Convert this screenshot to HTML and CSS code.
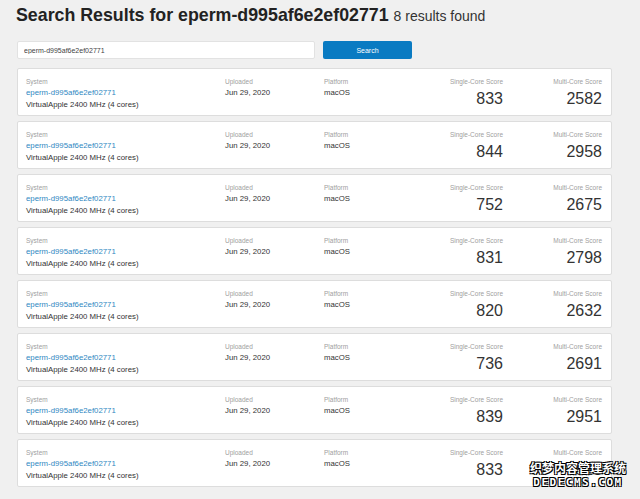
FILE: index.html
```html
<!DOCTYPE html>
<html lang="en">

<head>
    <meta charset="UTF-8">
    <meta name="viewport" content="width=device-width, initial-scale=1.0">
    <title>Search Results</title>
    <link rel="stylesheet" href="styles.css">
</head>

<body>
    <header class="page-header">
        <h1>Search Results for eperm-d995af6e2ef02771 <small>8 results found</small></h1>
    </header>

    <form class="search-form">
        <input class="search-input" type="text" value="eperm-d995af6e2ef02771">
        <button class="search-button" type="button">Search</button>
    </form>

    <main class="results">
        <div class="result">
            <div class="col system">
                <span class="label">System</span>
                <a class="link" href="#">eperm-d995af6e2ef02771</a>
                <span class="value">VirtualApple 2400 MHz (4 cores)</span>
            </div>
            <div class="col"><span class="label">Uploaded</span><span class="value">Jun 29, 2020</span></div>
            <div class="col"><span class="label">Platform</span><span class="value">macOS</span></div>
            <div class="col score"><span class="label">Single-Core Score</span><span class="number">833</span></div>
            <div class="col score"><span class="label">Multi-Core Score</span><span class="number">2582</span></div>
        </div>
        <div class="result">
            <div class="col system">
                <span class="label">System</span>
                <a class="link" href="#">eperm-d995af6e2ef02771</a>
                <span class="value">VirtualApple 2400 MHz (4 cores)</span>
            </div>
            <div class="col"><span class="label">Uploaded</span><span class="value">Jun 29, 2020</span></div>
            <div class="col"><span class="label">Platform</span><span class="value">macOS</span></div>
            <div class="col score"><span class="label">Single-Core Score</span><span class="number">844</span></div>
            <div class="col score"><span class="label">Multi-Core Score</span><span class="number">2958</span></div>
        </div>
        <div class="result">
            <div class="col system">
                <span class="label">System</span>
                <a class="link" href="#">eperm-d995af6e2ef02771</a>
                <span class="value">VirtualApple 2400 MHz (4 cores)</span>
            </div>
            <div class="col"><span class="label">Uploaded</span><span class="value">Jun 29, 2020</span></div>
            <div class="col"><span class="label">Platform</span><span class="value">macOS</span></div>
            <div class="col score"><span class="label">Single-Core Score</span><span class="number">752</span></div>
            <div class="col score"><span class="label">Multi-Core Score</span><span class="number">2675</span></div>
        </div>
        <div class="result">
            <div class="col system">
                <span class="label">System</span>
                <a class="link" href="#">eperm-d995af6e2ef02771</a>
                <span class="value">VirtualApple 2400 MHz (4 cores)</span>
            </div>
            <div class="col"><span class="label">Uploaded</span><span class="value">Jun 29, 2020</span></div>
            <div class="col"><span class="label">Platform</span><span class="value">macOS</span></div>
            <div class="col score"><span class="label">Single-Core Score</span><span class="number">831</span></div>
            <div class="col score"><span class="label">Multi-Core Score</span><span class="number">2798</span></div>
        </div>
        <div class="result">
            <div class="col system">
                <span class="label">System</span>
                <a class="link" href="#">eperm-d995af6e2ef02771</a>
                <span class="value">VirtualApple 2400 MHz (4 cores)</span>
            </div>
            <div class="col"><span class="label">Uploaded</span><span class="value">Jun 29, 2020</span></div>
            <div class="col"><span class="label">Platform</span><span class="value">macOS</span></div>
            <div class="col score"><span class="label">Single-Core Score</span><span class="number">820</span></div>
            <div class="col score"><span class="label">Multi-Core Score</span><span class="number">2632</span></div>
        </div>
        <div class="result">
            <div class="col system">
                <span class="label">System</span>
                <a class="link" href="#">eperm-d995af6e2ef02771</a>
                <span class="value">VirtualApple 2400 MHz (4 cores)</span>
            </div>
            <div class="col"><span class="label">Uploaded</span><span class="value">Jun 29, 2020</span></div>
            <div class="col"><span class="label">Platform</span><span class="value">macOS</span></div>
            <div class="col score"><span class="label">Single-Core Score</span><span class="number">736</span></div>
            <div class="col score"><span class="label">Multi-Core Score</span><span class="number">2691</span></div>
        </div>
        <div class="result">
            <div class="col system">
                <span class="label">System</span>
                <a class="link" href="#">eperm-d995af6e2ef02771</a>
                <span class="value">VirtualApple 2400 MHz (4 cores)</span>
            </div>
            <div class="col"><span class="label">Uploaded</span><span class="value">Jun 29, 2020</span></div>
            <div class="col"><span class="label">Platform</span><span class="value">macOS</span></div>
            <div class="col score"><span class="label">Single-Core Score</span><span class="number">839</span></div>
            <div class="col score"><span class="label">Multi-Core Score</span><span class="number">2951</span></div>
        </div>
        <div class="result">
            <div class="col system">
                <span class="label">System</span>
                <a class="link" href="#">eperm-d995af6e2ef02771</a>
                <span class="value">VirtualApple 2400 MHz (4 cores)</span>
            </div>
            <div class="col"><span class="label">Uploaded</span><span class="value">Jun 29, 2020</span></div>
            <div class="col"><span class="label">Platform</span><span class="value">macOS</span></div>
            <div class="col score"><span class="label">Single-Core Score</span><span class="number">833</span></div>
            <div class="col score"><span class="label">Multi-Core Score</span><span class="number">2826</span></div>
        </div>
    </main>

    <div class="watermark">
        <span class="watermark-cn">织梦内容管理系统</span>
        <span class="watermark-en">DEDECMS.COM</span>
    </div>
</body>

</html>
```

FILE: styles.css
```css
body {
    margin: 0;
    padding: 0 28px 0 16px;
    background: #f0f0f0;
    color: #333;
    font-family: "Liberation Sans", Arial, sans-serif;
}

.page-header h1 {
    margin: 0;
    padding-top: 5px;
    height: 36px;
    font-size: 17.8px;
    font-weight: bold;
    color: #222;
}

.page-header small {
    font-size: 14px;
    font-weight: normal;
    color: #333;
}

.search-form {
    display: flex;
    gap: 8px;
    margin-left: 1px;
    height: 18px;
}

.search-input {
    box-sizing: border-box;
    width: 298px;
    height: 18px;
    margin: 0;
    padding: 0 6px;
    border: 1px solid #e2e2e2;
    border-radius: 2px;
    background: #fff;
    font-family: inherit;
    font-size: 7px;
    color: #444;
}

.search-button {
    box-sizing: border-box;
    width: 89px;
    height: 18px;
    margin: 0;
    border: none;
    border-radius: 2px;
    background: #0a7bc2;
    color: #fff;
    font-family: inherit;
    font-size: 7px;
}

.results {
    display: flex;
    flex-direction: column;
    gap: 5px;
    margin: 9px 0 0 1px;
}

.result {
    box-sizing: border-box;
    height: 48px;
    padding: 8px 9px 0 8px;
    background: #fff;
    border: 1px solid #ddd;
    border-radius: 2px;
    display: grid;
    grid-template-columns: 199px 99px 99px 1fr 99px;
}

.col {
    display: flex;
    flex-direction: column;
}

.score {
    align-items: flex-end;
}

.label {
    font-size: 6.5px;
    line-height: 10px;
    color: #a0a0a0;
}

.value,
.link {
    font-size: 7.8px;
    line-height: 12px;
}

.link {
    color: #2f88c2;
    text-decoration: none;
}

.number {
    font-size: 16px;
    line-height: 18px;
    margin-top: 3px;
    color: #333;
}

.watermark {
    position: absolute;
    left: 530px;
    top: 459px;
    display: flex;
    flex-direction: column;
    align-items: center;
    font-family: "Noto Sans CJK SC", sans-serif;
    font-weight: bold;
    color: #fff;
    text-shadow: -1px -1px 0 #000, 1px -1px 0 #000, -1px 1px 0 #000, 1px 1px 0 #000;
}

.watermark-cn {
    font-size: 12px;
    line-height: 17px;
}

.watermark-en {
    font-family: "DejaVu Sans Mono", monospace;
    font-size: 11px;
    line-height: 13px;
    letter-spacing: 1.5px;
}
```
